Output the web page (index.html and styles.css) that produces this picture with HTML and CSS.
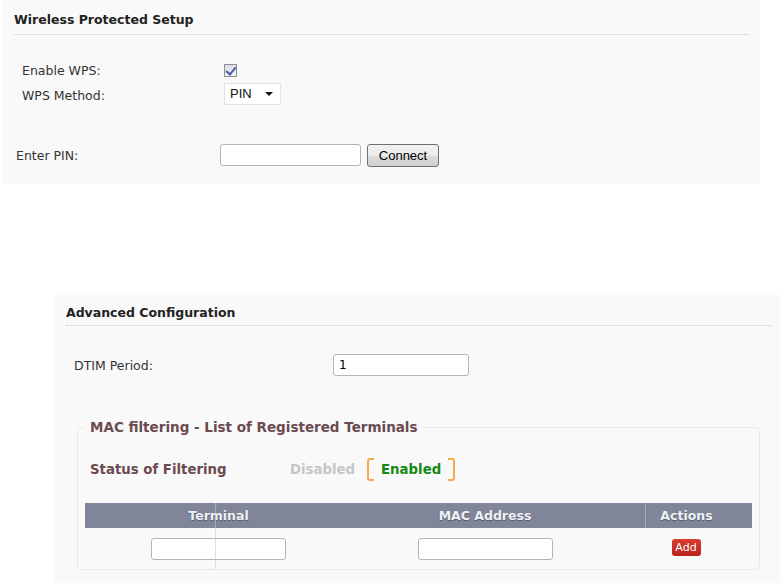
FILE: index.html
```html
<!DOCTYPE html>
<html>
	<head>
		<meta charset="UTF-8">
		<title>Wireless Settings</title>
		<link rel="stylesheet" href="styles.css">
	</head>
	<body>
		<div class="panel wps">
			<h3 class="panelTitle">Wireless Protected Setup</h3>
			<div class="row first">
				<span class="label">Enable WPS:</span>
				<input type="checkbox" class="check" checked />
			</div>
			<div class="row">
				<span class="label">WPS Method:</span>
				<span class="selectBox">
					<select class="method">
						<option>PIN</option>
						<option>PBC</option>
					</select>
				</span>
			</div>
			<div class="row pinRow">
				<span class="label">Enter PIN:</span>
				<input type="text" class="field pinField" />
				<input type="button" class="btn" value="Connect" />
			</div>
		</div>

		<div class="panel advanced">
			<h3 class="panelTitle">Advanced Configuration</h3>
			<div class="row dtim">
				<span class="label">DTIM Period:</span>
				<input type="text" class="field dtimField" value="1" />
			</div>
			<fieldset class="macBox">
				<legend>MAC filtering - List of Registered Terminals</legend>
				<div class="status">
					<span class="statusLabel">Status of Filtering</span>
					<span class="off">Disabled</span>
					<span class="on">Enabled</span>
				</div>
				<div class="macTable">
					<div class="th">Terminal</div>
					<div class="th mac">MAC Address</div>
					<div class="th act">Actions</div>
					<div class="td"><input type="text" class="field cellField" /></div>
					<div class="td mac"><input type="text" class="field cellField" /></div>
					<div class="td act"><span class="addBtn">Add</span></div>
					<span class="stray"></span>
				</div>
			</fieldset>
		</div>
	</body>
</html>
```

FILE: styles.css
```css
*{
	margin: 0px;
	padding: 0px;
	box-sizing: border-box;
}
body{
	background: #fff;
	font-family: "DejaVu Sans", Verdana, sans-serif;
	font-size: 12.5px;
	color: #333;
}
.panel{
	background: #f9f9f9;
}
.wps{
	margin-left: 2px;
	width: 758px;
	height: 184px;
}
.advanced{
	margin-left: 55px;
	margin-top: 111px;
	height: 288px;
	overflow: hidden;
}
.panelTitle{
	font-size: 12.5px;
	font-weight: bold;
	color: #222;
	line-height: 14px;
	border-bottom: 1px dotted #c8c8c8;
}
.wps .panelTitle{
	margin: 0 11px 0 12px;
	padding: 13px 0 7px;
}
.advanced .panelTitle{
	margin: 0 8px 0 11px;
	padding: 11px 0 5px;
}
.row{
	display: flex;
	align-items: center;
	height: 25px;
}
.wps .row .label{
	width: 222px;
	padding-left: 20px;
}
.wps .first{
	margin-top: 23px;
}
.wps .pinRow{
	margin-top: 36px;
	height: 22px;
}
.wps .pinRow .label{
	width: 218px;
	padding-left: 14px;
}
.check{
	appearance: none;
	width: 13px;
	height: 13px;
	border: 1px solid #8e8f8f;
	background: linear-gradient(#dcdde6, #f4f4f7);
	position: relative;
}
.check:checked::after{
	content: '';
	position: absolute;
	left: 3px;
	top: 0px;
	width: 4px;
	height: 8px;
	border-right: 2px solid #4a5fa8;
	border-bottom: 2px solid #4a5fa8;
	transform: rotate(40deg);
}
.selectBox{
	position: relative;
	display: inline-block;
	margin-top: -4px;
}
.method{
	appearance: none;
	width: 57px;
	height: 22px;
	border: 1px solid #e3e3e3;
	background: #fff;
	font-family: "Liberation Sans", Arial, sans-serif;
	font-size: 13px;
	color: #111;
	padding-left: 5px;
	outline: none;
}
.selectBox::after{
	content: '';
	position: absolute;
	right: 8px;
	top: 9px;
	border-left: 4px solid transparent;
	border-right: 4px solid transparent;
	border-top: 4px solid #111;
	pointer-events: none;
}
.field{
	height: 22px;
	border: 1px solid #b5b5b5;
	border-radius: 3px;
	background: #fff;
	font-family: "DejaVu Sans", Verdana, sans-serif;
	font-size: 12px;
	padding-left: 5px;
	outline: none;
}
.pinField{
	width: 141px;
}
.btn{
	margin-left: 6px;
	width: 72px;
	height: 23px;
	border: 1px solid #707070;
	border-radius: 3px;
	background: linear-gradient(#f2f2f2, #ebebeb 50%, #dddddd 51%, #cfcfcf);
	font-family: "Liberation Sans", Arial, sans-serif;
	font-size: 13px;
	color: #000;
}
.dtim{
	margin-top: 28px;
	height: 22px;
}
.dtim .label{
	width: 278px;
	padding-left: 19px;
}
.dtimField{
	width: 136px;
}
.macBox{
	margin: 43px 0 0 22px;
	width: 683px;
	border: 1px solid #ebebeb;
	border-radius: 4px;
	padding: 0 7px;
}
.macBox legend{
	margin-left: 0px;
	padding: 0 5px;
	font-size: 13.5px;
	font-weight: bold;
	color: #6b4a50;
	line-height: 16px;
}
.status{
	display: flex;
	align-items: center;
	margin-top: 23px;
	height: 23px;
	padding-left: 5px;
	font-size: 13.3px;
	font-weight: bold;
}
.statusLabel{
	color: #6b4a50;
	width: 200px;
}
.off{
	color: #c6c6c6;
}
.on{
	position: relative;
	margin-left: 12px;
	width: 88px;
	height: 23px;
	line-height: 19px;
	text-align: center;
	color: #138a13;
	border: 2px solid #f3a94c;
	border-radius: 3px;
}
.on::before{
	content: '';
	position: absolute;
	left: 5px;
	right: 5px;
	top: -2px;
	bottom: -2px;
	border-top: 2px solid #f9f9f9;
	border-bottom: 2px solid #f9f9f9;
}
.macTable{
	position: relative;
	display: grid;
	grid-template-columns: 267px 293px 1fr;
	margin-top: 22px;
}
.th{
	height: 25px;
	line-height: 25px;
	background: #80859a;
	color: #eef0f5;
	font-size: 12.5px;
	font-weight: bold;
	text-align: center;
	text-shadow: 0 1px 1px #555a66;
}
.th.act{
	border-left: 1px solid #a5a9b6;
}
.mac{
	padding-right: 27px;
}
.act{
	padding-right: 25px;
}
.td{
	height: 41px;
	display: flex;
	align-items: center;
	justify-content: center;
}
.cellField{
	width: 135px;
}
.addBtn{
	display: inline-block;
	width: 29px;
	height: 17px;
	line-height: 17px;
	border-radius: 3px;
	background: linear-gradient(#dc3b30, #b8231c);
	color: #fff;
	font-size: 11px;
	text-align: center;
	margin-top: -3px;
}
.stray{
	position: absolute;
	left: 130px;
	top: 0;
	bottom: 0;
	width: 1px;
	background: rgba(200, 200, 210, 0.6);
}
```
